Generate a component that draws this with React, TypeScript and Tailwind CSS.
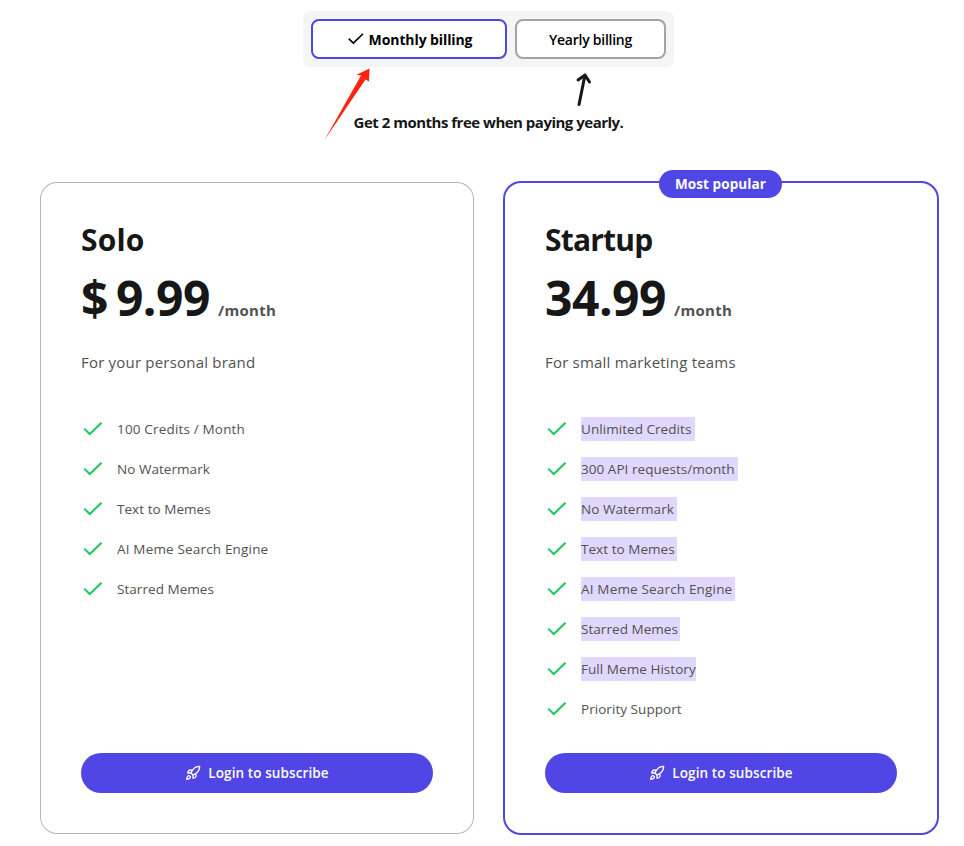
import { Rocket } from 'lucide-react';

type Feature = {
	name: string;
	tracking?: string;
	// width class of the text marker, if the feature is marked
	mark?: string;
};

type Plan = {
	name: string;
	nameClass: string;
	price: string;
	priceClass: string;
	description: string;
	popular: boolean;
	features: Feature[];
};

const plans: Plan[] = [
	{
		name: 'Solo',
		nameClass: 'tracking-[0.2px]',
		price: '$ 9.99',
		priceClass: 'w-[137px] tracking-[-0.5px] [word-spacing:-4px]',
		description: 'For your personal brand',
		popular: false,
		features: [
			{ name: '100 Credits / Month', tracking: 'tracking-[0.17px]' },
			{ name: 'No Watermark' },
			{ name: 'Text to Memes' },
			{ name: 'AI Meme Search Engine', tracking: 'tracking-[0.17px]' },
			{ name: 'Starred Memes' },
		],
	},
	{
		name: 'Startup',
		nameClass: 'tracking-[-0.8px]',
		price: '34.99',
		priceClass: 'w-[129px] tracking-[-0.5px]',
		description: 'For small marketing teams',
		popular: true,
		features: [
			{ name: 'Unlimited Credits', mark: 'w-[114px]' },
			{ name: '300 API requests/month', mark: 'w-[157px]' },
			{ name: 'No Watermark', mark: 'w-24' },
			{ name: 'Text to Memes', mark: 'w-24' },
			{ name: 'AI Meme Search Engine', tracking: 'tracking-[0.17px]', mark: 'w-[154px]' },
			{ name: 'Starred Memes', mark: 'w-[99px]' },
			{ name: 'Full Meme History', mark: 'w-[115px]' },
			{ name: 'Priority Support' },
		],
	},
];

const CheckIcon = ({ className }: { className: string }) => (
	<svg className={className} viewBox="0 0 24 24" fill="none" stroke="currentColor" strokeWidth="2">
		<path d="M3.2 11.6 8.800 17 20.500 5.700" />
	</svg>
);

const BillingToggle = () => {
	return (
		<div className="flex w-[371px] gap-2 rounded-lg bg-neutral-100 p-2 text-sm text-black">
			<button className="flex h-10 w-[196px] items-center justify-center rounded-lg border-2 border-[#4f46e5] bg-white font-bold">
				<CheckIcon className="mr-[3px] size-5" />
				<span className="pt-px tracking-[-0.1px]">Monthly billing</span>
			</button>
			<button className="h-10 w-[151px] rounded-lg border-2 border-[#a3a3a3] bg-white pt-px font-semibold tracking-[-0.25px]">
				Yearly billing
			</button>
		</div>
	);
};

const PlanCard = ({ plan }: { plan: Plan }) => {
	return (
		<div
			className={
				plan.popular
					? 'relative flex h-[650px] flex-col rounded-2xl p-10 ring-2 ring-[#4f46e5]'
					: 'relative flex h-[650px] flex-col rounded-2xl p-10 ring-1 ring-[#b5b5b5]'
			}>
			{plan.popular && (
				<div className="absolute -top-[13px] left-[154px] flex h-7 w-[123px] items-center justify-center rounded-full bg-[#4f46e5] pt-px text-[13.5px] font-bold tracking-[0.1px] text-white">
					Most popular
				</div>
			)}
			<h3 className={`-mt-px text-[30px] leading-9 font-bold text-neutral-900 ${plan.nameClass}`}>{plan.name}</h3>
			<p className="mt-2 flex items-baseline leading-[64px] font-bold">
				<span className={`text-5xl leading-[64px] whitespace-nowrap text-neutral-900 ${plan.priceClass}`}>{plan.price}</span>
				<span className="text-[15px] tracking-[0.3px] text-neutral-600">/month</span>
			</p>
			<p className="mt-1.5 text-[15px] leading-7 tracking-[0.2px] text-neutral-600">{plan.description}</p>
			<ul className="mt-[41px] flex flex-col gap-4 text-[13.5px] leading-6 text-neutral-600">
				{plan.features.map((feature) => (
					<li key={feature.name} className={`flex gap-3 ${feature.tracking ?? 'tracking-[0.05px]'}`}>
						<CheckIcon className="size-6 text-[#22c55e]" />
						{feature.mark ? (
							<span className={`bg-[#e0d8ff] whitespace-nowrap ${feature.mark}`}>{feature.name}</span>
						) : (
							<span>{feature.name}</span>
						)}
					</li>
				))}
			</ul>
			<button className="mt-auto flex h-10 items-center justify-center gap-[7px] rounded-full bg-[#4f46e5] text-[13.5px] font-semibold tracking-[0.1px] text-white">
				<Rocket size={16} strokeWidth={2} />
				<span>Login to subscribe</span>
			</button>
		</div>
	);
};

const App = () => {
	return (
		<div className="h-[846px] w-[964px] bg-white pt-[11px] pl-[41px] font-['Open_Sans',sans-serif]">
			<div className="relative flex w-[895px] flex-col items-center">
				<BillingToggle />
				<svg className="absolute top-[53px] left-[279px] h-20 w-[60px]" viewBox="0 0 60 80" fill="#ff2412">
					<path d="M4.500 76 41 11.500 36.500 10.800 49.500 4.500 49 17.500 45.500 15.500Z" />
				</svg>
				<svg className="absolute top-[55px] left-[527px] h-11 w-8" viewBox="0 0 32 44" fill="none" stroke="#171717" strokeWidth="3" strokeLinecap="round" strokeLinejoin="round">
					<path d="M11 38.500 17 9M10 14 17 9 21.500 16" />
				</svg>
				<p className="mt-[41px] text-[15px] leading-7 font-bold tracking-[-0.5px] text-neutral-900">
					Get 2 months free when paying yearly.
				</p>
			</div>
			<div className="mt-[47px] grid w-[896px] grid-cols-2 gap-8">
				{plans.map((plan) => (
					<PlanCard key={plan.name} plan={plan} />
				))}
			</div>
		</div>
	);
};

export default App;
